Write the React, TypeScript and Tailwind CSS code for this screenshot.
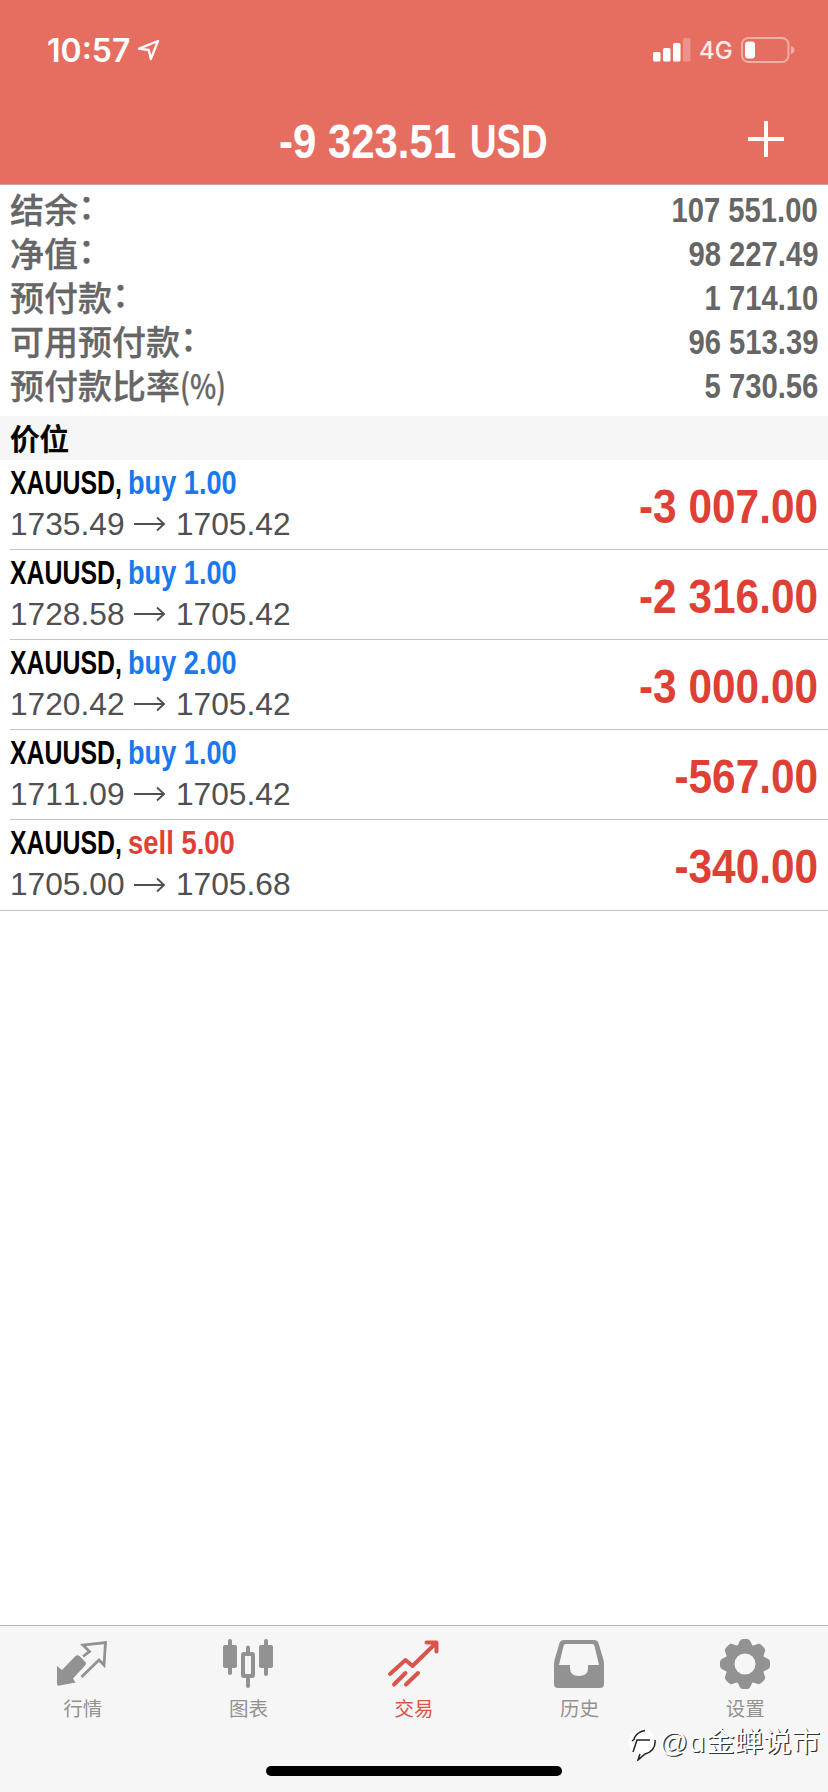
import type { ReactNode } from "react";

const summary = [
  { label: "结余", suffix: "：", value: "107 551.00" },
  { label: "净值", suffix: "：", value: "98 227.49" },
  { label: "预付款", suffix: "：", value: "1 714.10" },
  { label: "可用预付款", suffix: "：", value: "96 513.39" },
  { label: "预付款比率", suffix: "(%)", value: "5 730.56" },
];

const positions = [
  { symbol: "XAUUSD,", side: "buy", volume: "1.00", open: "1735.49", current: "1705.42", profit: "-3 007.00" },
  { symbol: "XAUUSD,", side: "buy", volume: "1.00", open: "1728.58", current: "1705.42", profit: "-2 316.00" },
  { symbol: "XAUUSD,", side: "buy", volume: "2.00", open: "1720.42", current: "1705.42", profit: "-3 000.00" },
  { symbol: "XAUUSD,", side: "buy", volume: "1.00", open: "1711.09", current: "1705.42", profit: "-567.00" },
  { symbol: "XAUUSD,", side: "sell", volume: "5.00", open: "1705.00", current: "1705.68", profit: "-340.00" },
];

function StatusBar() {
  return (
    <div className="flex h-[100px] items-center pl-[47px] pr-[33px] text-white">
      <span className="w-[84px] pt-px font-['Inter',sans-serif] text-[32px] leading-none font-semibold whitespace-nowrap">10:57</span>
      <svg className="ml-[6px]" width="23" height="22" viewBox="0 0 23 22" fill="none" stroke="currentColor" strokeWidth="2.3" strokeLinejoin="round">
        <path d="M21 2 L2 9.6 L11.8 11 L13.8 20 Z" />
      </svg>
      <div className="ml-auto flex items-center">
        <svg width="38" height="24" viewBox="0 0 38 24" fill="currentColor">
          <rect x="0" y="14" width="7.5" height="9.5" rx="1.5" />
          <rect x="10" y="10" width="7.5" height="13.5" rx="1.5" />
          <rect x="20" y="5" width="7.5" height="18.5" rx="1.5" />
          <rect x="30" y="0" width="7.5" height="23.5" rx="1.5" opacity=".25" />
        </svg>
        <span className="ml-[8px] w-[34px] pt-[2px] font-['Inter',sans-serif] text-[24px] leading-none font-medium text-[#fdeceb]">4G</span>
        <svg className="ml-[8px]" width="54" height="26" viewBox="0 0 54 26">
          <rect x="1" y="1" width="46.5" height="24" rx="6.5" fill="none" stroke="#fff" strokeOpacity=".45" strokeWidth="2" />
          <rect x="4" y="4.5" width="10" height="17" rx="3" fill="#fff" />
          <path d="M50 9 Q53.5 10.5 53.5 13 Q53.5 15.500 50 17 Z" fill="#fff" fillOpacity=".45" />
        </svg>
      </div>
    </div>
  );
}

function Header() {
  return (
    <header className="h-[185px] shrink-0 border-b border-[#d3a29d] bg-[#e66e61]">
      <StatusBar />
      <div className="flex h-[78px] items-center pl-[279px] pr-[44px] text-white">
        <div className="flex pt-[4px] text-[49px] leading-[56px] font-bold">
          <span className="w-[190.500px] origin-left scale-x-[0.855] whitespace-nowrap">-9 323.51</span>
          <span className="w-[80px] origin-left scale-x-[0.75] whitespace-nowrap">USD</span>
        </div>
        <svg className="ml-auto" width="36" height="36" viewBox="0 0 36 36" stroke="currentColor" strokeWidth="4">
          <path d="M18 0V36M0 18H36" />
        </svg>
      </div>
    </header>
  );
}

function Arrow() {
  return (
    <svg className="mr-[10px] ml-[9px]" width="32" height="16" viewBox="0 0 32 16" fill="none" stroke="currentColor" strokeWidth="1.9">
      <path d="M0 8H30M23 1.500L30 8L23 14.500" />
    </svg>
  );
}

function Tab({ label, active, children }: { label: string; active?: boolean; children: ReactNode }) {
  return (
    <div className={active ? "flex flex-col items-center pt-[12px] text-[#d9544b]" : "flex flex-col items-center pt-[12px] text-[#929292]"}>
      <svg width="54" height="54" viewBox="0 0 54 54" fill="none" stroke="currentColor">
        {children}
      </svg>
      <span className="mt-[3px] text-[19.5px] leading-[28px]">{label}</span>
    </div>
  );
}

const teeth = [0, 45, 90, 135, 180, 225, 270, 315];

function TabBar() {
  return (
    <nav className="flex h-[167px] shrink-0 flex-col border-t border-[#b4b4b6] bg-[#f6f6f6]">
      <div className="grid grid-cols-5">
        <Tab label="行情">
          <path stroke="none" fill="currentColor" d="M1 28 L6 32 L19.500 18 Q21.500 16.500 23.500 18 L29.500 24 Q30.500 25.500 29.500 27 L17 40.500 L19.500 44.500 L2.500 47.700 Q1 47.700 1 46 Z" />
          <path d="M27 18.500 L33.500 13.500 L27 7 L49.500 4.500 L48 27 L43 22 L25.500 39" strokeWidth="2.800" />
        </Tab>
        <Tab label="图表">
          <g stroke="none" fill="currentColor">
            <rect x="2" y="7" width="14" height="23" rx="2" />
            <rect x="7" y="1" width="4" height="36" rx="2" />
            <rect x="38" y="7" width="14" height="23" rx="2" />
            <rect x="43" y="1" width="4" height="37" rx="2" />
            <rect x="25" y="7.500" width="4" height="10" rx="2" />
            <rect x="25" y="38" width="4" height="12" rx="2" />
          </g>
          <rect x="22" y="16" width="10" height="22" rx="1" strokeWidth="4" />
        </Tab>
        <Tab label="交易" active>
          <path d="M3 36 L18.500 22 L25.500 28 L49 5 M39.500 4.500 H49.500 V13.500 M7 46.500 L18.500 35 M19 46.500 L31 35" strokeWidth="4" strokeLinecap="round" strokeLinejoin="round" />
        </Tab>
        <Tab label="历史">
          <path transform="translate(-1 0)" fillRule="evenodd" stroke="none" fill="currentColor" d="M12 2 H42 Q45.500 2 46.500 5 L51.500 22 Q52 24 52 27 V46 Q52 50 48 50 H6 Q2 50 2 46 V27 Q2 24 2.500 22 L7.500 5 Q8.500 2 12 2 Z M14 6 Q12 6 11.500 8 L7 27 H18 V30 Q18 38 27 38 Q36 38 36 30 V27 H47 L42.500 8 Q42 6 40 6 Z" />
        </Tab>
        <Tab label="设置">
          <g stroke="none" fill="currentColor">
            <circle cx="27" cy="26" r="20" />
            {teeth.map((angle) => (
              <path key={angle} transform={`rotate(${angle} 27 26)`} d="M18 11 L21.500 3.500 Q22.500 1 25 1 H29 Q31.500 1 32.500 3.500 L36 11 Z" />
            ))}
          </g>
          <circle cx="27" cy="26" r="10.500" fill="#f6f6f6" stroke="none" />
        </Tab>
      </div>
      <div className="mx-auto mt-auto mb-[16px] h-[10px] w-[296px] rounded-full bg-black" />
    </nav>
  );
}

function Watermark() {
  return (
    <div className="absolute right-[8px] bottom-[30px] flex items-center text-[28.5px] leading-[40px] font-normal text-white [text-shadow:1.2px_1.2px_0.5px_#333]">
      <svg className="mt-[3px] mr-[1px]" width="30" height="34" viewBox="0 0 30 34" fill="none">
        <circle cx="14" cy="15" r="13.500" fill="#fff" />
        <path d="M6 11.500 Q9 5 17 3.500 M5 25 L9 13 H22 M7 11.500 L4 14 M27 13 Q28 24 17 27 L10 33 L12 27" stroke="#222" strokeWidth="1.500" />
      </svg>
      <span className="w-[30px] whitespace-nowrap">@</span>
      <span className="w-[17px] whitespace-nowrap">ɑ</span>
      <span className="whitespace-nowrap">金蝉说市</span>
    </div>
  );
}

export default function App() {
  return (
    <div className="relative flex h-[1792px] w-[828px] flex-col overflow-hidden bg-white font-['Liberation_Sans','Noto_Sans_CJK_SC',sans-serif] [font-kerning:none]" lang="zh-CN">
      <Header />
      <section className="h-[231px] shrink-0 pt-[3px] pr-[10px] pl-[10px] text-[#666]">
        {summary.map((row) => (
          <div key={row.label} className="flex h-[44px] items-center justify-between">
            <div className="flex font-['Noto_Sans_CJK_SC',sans-serif] text-[34px] leading-[42px] font-medium [-webkit-text-stroke:0.3px_#666]">
              <span className="-mt-[2px]">{row.label}</span>
              <span className={row.suffix === "：" ? "-mt-[6px]" : "-mt-[2px] origin-left scale-x-[0.82]"}>{row.suffix}</span>
            </div>
            <span className="origin-right scale-x-[0.847] text-[34.5px] leading-[44px] font-bold">{row.value}</span>
          </div>
        ))}
      </section>
      <h2 className="h-[44px] shrink-0 bg-[#f6f6f6] pl-[10px] font-['Noto_Sans_CJK_SC',sans-serif] text-[29.5px] leading-[42px] font-medium text-black [-webkit-text-stroke:0.7px_#000]">价位</h2>
      <main className="flex-1">
        {positions.map((p, i) => (
          <div key={i} className={i === positions.length - 1 ? "border-b border-[#c4c4c6] pl-[10px]" : "pl-[10px]"}>
            <div className={i === positions.length - 1 ? "flex h-[90px] items-center justify-between pr-[10px]" : "flex h-[90px] items-center justify-between border-b border-[#c4c4c6] pr-[10px]"}>
              <div className="pb-[2px]">
                <div className="flex h-[41px] text-[32.5px] leading-[41px] font-bold whitespace-nowrap">
                  <span className="w-[118px] origin-left scale-x-[0.765] text-black">{p.symbol}</span>
                  <span className={p.side === "buy" ? "origin-left scale-x-[0.835] text-[#1a78ee]" : "origin-left scale-x-[0.845] text-[#de4035]"}>
                    {p.side} {p.volume}
                  </span>
                </div>
                <div className="flex h-[41px] items-center text-[31.7px] leading-[41px] text-[#4f5052]">
                  <span className="w-[115px]">{p.open}</span>
                  <Arrow />
                  <span>{p.current}</span>
                </div>
              </div>
              <span className="origin-right scale-x-[0.865] pt-[2px] text-[49px] leading-[56px] font-bold text-[#de4035]">{p.profit}</span>
            </div>
          </div>
        ))}
      </main>
      <TabBar />
      <Watermark />
    </div>
  );
}
